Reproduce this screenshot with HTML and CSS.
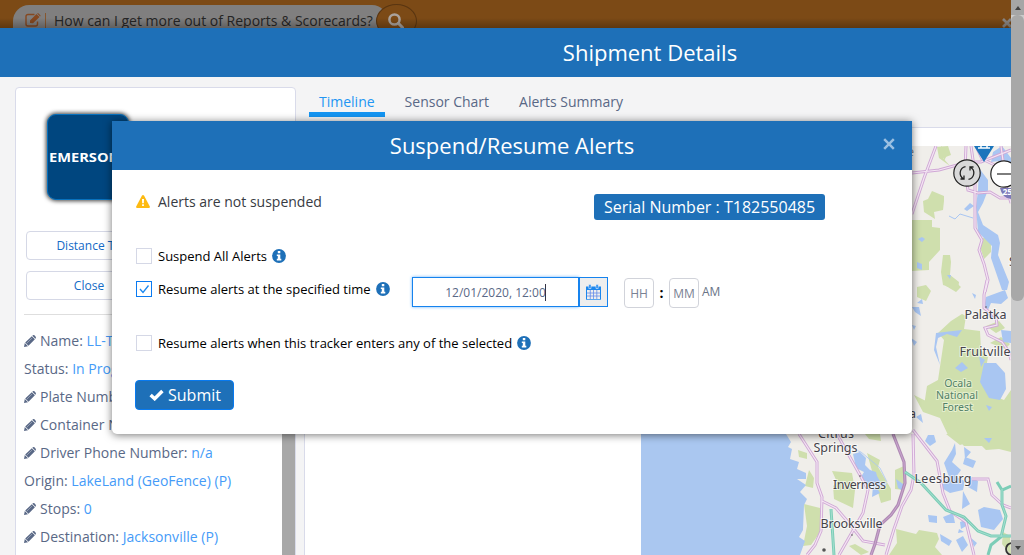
FILE: index.html
```html
<!DOCTYPE html>
<html lang="en">
<head>
<meta charset="utf-8">
<title>Shipment Details</title>
<link rel="stylesheet" href="styles.css">
</head>
<body>
<svg class="defs" width="0" height="0">
  <symbol id="pencil" viewBox="0 0 12 12"><path d="M0 12 .8 8 4 11.200ZM1.200 7.500 7.800 1.200 10.900 4.300 4.500 10.800ZM8.300.7C9.200-.1 10-.1 10.600.5L11.500 1.400C12.100 2 12.100 2.800 11.400 3.700Z"/><path d="M2.800 8.200 8.200 2.900" stroke="#fff" stroke-width=".6" opacity=".6"/></symbol>
  <symbol id="info" viewBox="0 0 14 14"><circle cx="7" cy="7" r="6.900"/><path fill="#fff" d="M5.800 2.100H8.300V4.200H5.800ZM4.800 5.400H8.300V9.800H9.300V11.500H4.800V9.800H5.800V7.100H4.800Z"/></symbol>
</svg>
<div class="app">
  <div class="page">
    <header class="topbar">
      <div class="ask">
        <svg class="ask-icon" viewBox="0 0 16 14"><path d="M9.500 1.500H3A2 2 0 0 0 1 3.500V11A2 2 0 0 0 3 13H10.500A2 2 0 0 0 12.500 11V8.500" fill="none" stroke="currentColor" stroke-width="1.400"/><path d="M5 10V7.500L11.500 1 14.500 4 8 10.300ZM12.200.5 13 .1 15.600 2.600 15.100 3.400Z" fill="currentColor"/></svg>
        <span class="ask-rule"></span>
        <span>How can I get more out of Reports &amp; Scorecards?</span>
      </div>
      <div class="search"><svg viewBox="0 0 16 16"><circle cx="6.500" cy="6.500" r="5.100" fill="none" stroke="currentColor" stroke-width="2.500"/><path d="M10.300 10.300 14.500 14.500" stroke="currentColor" stroke-width="3" stroke-linecap="round"/></svg></div>
      <svg class="top-close" viewBox="0 0 10 10"><path d="M1 1 9 9M9 1 1 9" stroke="#8b8784" stroke-width="2.700"/></svg>
    </header>
    <div class="titlebar">Shipment Details</div>
    <main class="content">
      <aside class="card">
        <div class="logo"><span>EMERSON</span></div>
        <div class="card-btn first">Distance To</div>
        <div class="card-btn">Close</div>
        <ul class="facts">
          <li><svg><use href="#pencil"/></svg>Name:&nbsp;<a>LL-T1</a></li>
          <li>Status:&nbsp;<a>In Progress</a></li>
          <li><svg><use href="#pencil"/></svg>Plate Number:&nbsp;<a>n/a</a></li>
          <li><svg><use href="#pencil"/></svg>Container Number:</li>
          <li><svg><use href="#pencil"/></svg>Driver Phone Number:&nbsp;<a>n/a</a></li>
          <li>Origin:&nbsp;<a>LakeLand (GeoFence) (P)</a></li>
          <li><svg><use href="#pencil"/></svg>Stops:&nbsp;<a>0</a></li>
          <li><svg><use href="#pencil"/></svg>Destination:&nbsp;<a>Jacksonville (P)</a></li>
        </ul>
        <div class="card-scroll"></div>
      </aside>
      <section class="detail">
        <nav class="tabs"><span class="tab active">Timeline</span><span class="tab">Sensor Chart</span><span class="tab">Alerts Summary</span></nav>
        <div class="panel">
          <svg class="map" viewBox="641 146 370 409">
            <rect x="641" y="146" width="370" height="409" fill="#f0eeea"/>
            <!-- forests and parks -->
            <g fill="#cfdfad">
              <path d="M937 147 948 146 951 155 943 158 950 166 939 158Z"/>
              <path d="M932 191 944 196 944 201 943 210 934 212 935 219 924 212 923 201 928 199ZM941 146 949 151 944 161Z"/>
              <path d="M912 220 932 220 932 227 940 228 940 250 929 262 929 270 912 271Z"/>
              <path d="M943 255 950 255 951 262 950 275 959 282 958 290 943 285 941 272ZM981 240 986 236 991 243 991 252 984 259 980 247Z"/>
              <path d="M943 281 953 280 961 287 956 292 946 286ZM917 287 926 285 931 291 926 301 917 297Z"/>
              <path d="M951 321 962 314 966 316 964 329 980 331 981 350 988 357 984 379 992 395 1004 400 1011 390V450L991 446 964 446 945 426 943 414 924 406 927 386 938 380 944 340 938 333Z"/>
              <path d="M914 395 928 402 935 410 955 413 958 433 948 435 940 418 923 412ZM986 326 999 321 1005 328 996 333ZM990 343 1001 337 1010 344 1005 349Z"/>
              <path d="M832 471 852 473 855 490 853 508 834 499 833 486 837 482ZM867 453 880 460 878 467 891 489 891 500 881 503 874 478ZM895 470 904 466 904 490 895 489ZM865 434 880 434 881 441 869 439Z"/>
              <path d="M804 504 820 508 821 531 811 545 803 546 807 526ZM809 470 814 478 813 488 805 486Z"/>
              <path d="M896 529 916 534 919 530 937 533 939 539 935 547 942 555H889L897 543ZM1003 532 1010 536 1011 555 1002 544Z"/>
              <path d="M946 434 989 434 1011 428V452L999 449 986 450 976 440 960 445Z"/>
              <path d="M798 450 807 453 807 459 799 457ZM849 546 855 544 869 552 861 555Z"/>
            </g>
            <!-- Gulf coast -->
            <path fill="#aac7f0" d="M641 146H760L786 434 791 442 788 447 792 449 790 459 799 462 797 469 806 473 806 479 797 479 806 485 800 492 807 499 804 505 803 530 799 537 805 541 800 555H641Z"/>
            <!-- lakes and rivers -->
            <g fill="#a9c6f2">
              <path d="M979 168 988 180 988 190 983 203 978 212 983 225 998 235 1000 243 998 255 1009 282 1007 290 1002 290 991 258 992 246 978 232 976 207 978 190Z"/>
              <path d="M993 152 1002 146 1011 158V166L999 161 991 162ZM970 203 974 206 967 211 964 209Z"/>
              <path d="M986 297 1005 290 1008 298 1001 304 991 303 987 312 997 317 992 320 984 309ZM1001 330 1011 331V343L1003 342Z"/>
              <path d="M984 363 996 363 1005 373 1006 389 1000 400 989 398 980 382ZM955 368 962 362 968 368 961 372ZM979 356 985 360 981 367Z"/>
              <path d="M936 333 953 331 962 330 957 337 947 334 938 338 936 347 940 365 934 350Z"/>
              <path d="M978 510 984 507 1000 510 1003 519 994 530 981 527Z"/>
              <path d="M955 443 952 450 944 463 949 477 940 487 950 493 963 490 965 481 956 477 961 470 952 462 956 454ZM964 447 971 452 965 459ZM965 457 976 461 973 468 963 464ZM969 476 978 481 977 492 968 487ZM963 491 970 504 962 509Z"/>
              <path d="M928 435 934 435 936 442 930 446 925 441ZM896 479 903 484 903 491 898 488ZM916 417 921 414 923 423Z"/>
              <path d="M853 454 860 452 866 458 865 465 870 470 876 472 877 476 881 483 877 488 880 493 872 497 873 486 866 484 861 477 864 472 856 468ZM879 482 887 483 885 487 880 487Z"/>
              <path d="M928 515 937 516 937 523 929 522ZM943 517 953 513 955 523 946 523ZM960 522 968 519 968 525 961 529ZM940 534 952 541 949 546 941 541ZM956 540 963 536 968 545 962 552ZM971 538 977 543 974 547ZM959 529 964 532 958 533Z"/>
              <path d="M918 239 922 237 925 239 922 242ZM917 262 922 264 922 270 917 268ZM947 275 951 275 950 279ZM912 307 919 307 921 316 915 312ZM922 299 923 304 917 303ZM972 293 976 295 975 299ZM986 405 992 407 989 411ZM912 325 916 326 914 330ZM911 338 917 342 914 346ZM984 438 992 438 989 443Z"/>
            </g>
            <path d="M949 216 955 219 960 214 973 218" fill="none" stroke="#a9c6f2"/>
            <path d="M835 434 843 445 861 452 880 468 887 482" fill="none" stroke="#a9c6f2" stroke-width=".8"/>
            <!-- roads -->
            <g class="road-edge">
              <path d="M912 173 939 170 968 162 981 162 1011 150M936 146 924 178 912 214"/>
              <path d="M966 146 965 170 968 190 978 193 990 192 1000 198 1011 198M971 146 973 160 975 180 975 210 975 228 982 240 979 250 984 264 988 280 985 292M976 146 982 159 1001 168 1011 203M1001 146 1004 168"/>
              <path d="M987 280 984 295 984 308 996 317 997 325 985 328 988 335 1002 342 1009 352 1011 360"/>
              <path d="M799 434 817 462 817 483 822 497 821 531 815 545 807 555M822 501 836 508 848 522 863 541 885 545M837 434 860 475 868 490 863 513 839 555M913 434 914 475 911 490 902 506 894 529 886 555M913 430 937 461 943 493 950 511 966 522 974 555M972 479 988 479 992 495 1003 505 1011 508"/>
            </g>
            <g class="road-core">
              <path d="M912 173 939 170 968 162 981 162 1011 150M936 146 924 178 912 214"/>
              <path d="M966 146 965 170 968 190 978 193 990 192 1000 198 1011 198M971 146 973 160 975 180 975 210 975 228 982 240 979 250 984 264 988 280 985 292M976 146 982 159 1001 168 1011 203M1001 146 1004 168"/>
              <path d="M987 280 984 295 984 308 996 317 997 325 985 328 988 335 1002 342 1009 352 1011 360"/>
              <path d="M799 434 817 462 817 483 822 497 821 531 815 545 807 555M822 501 836 508 848 522 863 541 885 545M837 434 860 475 868 490 863 513 839 555M913 434 914 475 911 490 902 506 894 529 886 555M913 430 937 461 943 493 950 511 966 522 974 555M972 479 988 479 992 495 1003 505 1011 508"/>
            </g>
            <path d="M893 434 904 462 905 483 898 505 891 515 880 525 875 544 871 555" fill="none" stroke="#b08bb5" stroke-width="3.200"/>
            <path d="M893 434 904 462 905 483 898 505 891 515 880 525 875 544 871 555" fill="none" stroke="#c9a6ce" stroke-width="1"/>
            <path d="M831 509 834 555M905 472 921 483 946 510 964 517 978 531 991 536 1011 536M997 482 1002 490 1011 486M1002 489 1002 505 1006 516 1001 537 991 545 988 555" fill="none" stroke="#7ccdb7" stroke-width="3"/>
            <path d="M831 509 834 555M905 472 921 483 946 510 964 517 978 531 991 536 1011 536M1002 489 1002 505 1006 516 1001 537" fill="none" stroke="#a9e0d1" stroke-width=".9"/>
            <!-- place names -->
            <g class="places">
              <text x="964.500" y="319" textLength="42">Palatka</text>
              <text x="959.500" y="356" textLength="51">Fruitville</text>
              <text x="818" y="438" textLength="36">Citrus</text>
              <text x="813.500" y="452" textLength="44">Springs</text>
              <text x="833" y="489" textLength="53">Inverness</text>
              <text x="914.500" y="483" textLength="57">Leesburg</text>
              <text x="820.500" y="528" textLength="62">Brooksville</text>
              <text x="880" y="418" textLength="36">Ocala</text>
              <text x="1009" y="266">S</text>
              <text x="907" y="156" opacity=".6">e</text>
            </g>
            <g class="forest">
              <text x="958" y="387">Ocala</text><text x="957" y="399">National</text><text x="957.500" y="411">Forest</text>
            </g>
            <g fill="#555"><circle cx="824" cy="550" r="1.800"/><circle cx="860" cy="476" r="1" opacity=".6"/><circle cx="852" cy="535" r="1" opacity=".6"/><circle cx="986" cy="307" r="1" opacity=".6"/></g>
            <!-- markers and controls -->
            <path d="M974 146H994L984 162Z" fill="#1b75bc"/><path d="M978 148H990M981 146V148M987 146V148" stroke="#fff" stroke-width="1.500"/>
            <path d="M1000 188H1011V199Q1002 198 1000 188Z" fill="#7d78b8"/><text x="1002.500" y="195" font-family="Open Sans, sans-serif" font-size="8.500" font-weight="700" fill="#fff">25</text>
            <circle cx="967" cy="173" r="13.200" fill="#d9d9d9" stroke="#222" stroke-width="1.200"/>
            <g fill="none" stroke="#222" stroke-width="1.300"><path d="M963.500 178.800A6.600 6.600 0 0 1 965.500 166.600M968.500 179.400A6.600 6.600 0 0 0 970.500 167.200M960.500 179H964V175.500M973.500 167H970V170.500"/></g>
            <circle cx="1004" cy="174" r="13.200" fill="#fff" stroke="#222" stroke-width="1.200"/><path d="M997 174H1011" stroke="#666" stroke-width="1.700"/>
            <circle cx="1012" cy="549" r="6" fill="none" stroke="#333" stroke-width="1.800"/>
          </svg>
        </div>
      </section>
    </main>
    <div class="dialog">
      <div class="dialog-head">Suspend/Resume Alerts<svg class="dialog-close" viewBox="0 0 12 12"><path d="M1.200 1.200 10.800 10.800M10.800 1.200 1.200 10.800" stroke="#9bc0e2" stroke-width="2.500"/></svg></div>
      <div class="dialog-body">
        <div class="status-row">
          <svg class="warn" viewBox="0 0 14 13"><path d="M6 .6Q7-.5 8 .6L13.800 11.500Q14.100 13 13 13H1Q-.1 13 .2 11.500Z" fill="#fdba12"/><path d="M6 4H8L7.800 8.300H6.200ZM6.100 9.200H7.900V11H6.100Z" fill="#fff"/></svg>
          <span class="status-text">Alerts are not suspended</span>
          <span class="serial">Serial Number : T182550485</span>
        </div>
        <label class="option all"><span class="box"></span><span>Suspend All Alerts</span><svg class="info"><use href="#info"/></svg></label>
        <div class="time-row">
          <label class="option time"><span class="box on"><svg viewBox="0 0 14 14"><path d="M3 7 6 10.500 11.500 3.500" fill="none" stroke="#1a88f0" stroke-width="1.300"/></svg></span><span>Resume alerts at the specified time</span><svg class="info"><use href="#info"/></svg></label>
          <div class="date"><span>12/01/2020, 12:00</span><i class="caret"></i></div>
          <div class="cal"><svg viewBox="0 0 15 16"><path d="M0 2.500H15V15.700H0Z" fill="#1b86ed"/><path d="M1 6H14V15H1Z" fill="#eee"/><path d="M4.300 6V15M7.500 6V15M10.800 6V15M1 9H14M1 12H14" stroke="#648bea" stroke-width=".8"/><path d="M2.800.4H5V4.500H2.800ZM10 .4H12.200V4.500H10Z" fill="#1b86ed" stroke="#e8eefb" stroke-width=".6"/></svg></div>
          <div class="unit">HH</div><b class="colon">:</b><div class="unit">MM</div><span class="ampm">AM</span>
        </div>
        <label class="option enter"><span class="box"></span><span>Resume alerts when this tracker enters any of the selected</span><svg class="info"><use href="#info"/></svg></label>
        <div class="submit"><svg viewBox="0 0 14 11"><path d="M1.500 5.500 5.300 9 12.500 1.700" fill="none" stroke="#fff" stroke-width="3.200"/></svg><span>Submit</span></div>
      </div>
    </div>
  </div>
  <div class="scrollbar"><div class="arrow up"></div><div class="thumb"></div><div class="arrow down"></div></div>
</div>
</body>
</html>
```
FILE: styles.css
```css
* { box-sizing: border-box; }
body { margin: 0; font-family: "Open Sans", "Noto Sans", sans-serif; font-size: 14px; color: #596886; }
.defs { position: absolute; }
.app { display: flex; width: 1024px; height: 555px; overflow: hidden; }
.page { position: relative; flex: 1; display: flex; flex-direction: column; overflow: hidden; background: #f4f4f5; }
.topbar { display: flex; height: 28px; flex: none; background: #7c4a16; overflow: hidden; position: relative; padding: 5px 0 0 13px; }
.topbar::after { content: ""; position: absolute; inset: 18px 0 0 0; background: linear-gradient(transparent, rgba(0,0,0,.25)); }
.ask { display: flex; align-items: center; flex: none; width: 375px; height: 30px; padding-left: 12px; border-radius: 16px 16px 0 0; background: #807f7f; color: #252525; font-size: 14px; white-space: nowrap; }
.ask-icon { width: 16px; height: 14px; color: #854820; }
.ask-rule { width: 1px; height: 15px; margin: 0 8px 0 4px; background: #87572f; }
.search { display: flex; position: relative; flex: none; width: 41px; height: 34px; margin: -1px 0 0 -12px; padding: 8px 0 0 11px; border: 1px solid #593511; border-radius: 50%; background: #7c4a16; color: #aaa29c; }
.search svg { width: 16px; height: 16px; }
.top-close { width: 10px; height: 10px; margin: 13px 0 0 auto; flex: none; position: relative; left: 1px; }
.titlebar { flex: none; height: 49px; padding-left: 289px; background: #1e70b8; color: #fff; font-size: 22px; line-height: 49px; text-align: center; }
.content { display: flex; flex: 1; min-height: 0; padding: 10px 0 0 15px; gap: 8px; }
.card { position: relative; width: 281px; height: 500px; flex: none; padding: 26px 10px 0; border: 1px solid #d9dbea; border-radius: 4px; background: #fff; }
.logo { display: flex; align-items: center; width: 82px; height: 86px; margin-left: 21px; padding-left: 1px; border-radius: 9px; border: 1px solid #0871bd; background: #00467f; box-shadow: 0 0 4px 1px rgba(0,0,0,.75); color: #fff; font-size: 12px; font-weight: 700; overflow: hidden; }
.logo span { transform: scaleX(1.22); transform-origin: left; }
.card-btn { width: 126px; height: 29px; margin-top: 11px; border: 1px solid #d5d8e6; border-radius: 4px; color: #126ac6; font-size: 12px; line-height: 27px; text-align: center; }
.card-btn.first { margin-top: 31px; }
.facts { list-style: none; margin: 14px -2px 0; padding: 11px 0 0; border-top: 1px solid #dedede; }
.facts li { display: flex; align-items: center; height: 28px; white-space: nowrap; letter-spacing: .02px; }
.facts svg { width: 12px; height: 12px; margin: 2px 4px 0 0; fill: #596886; }
.facts a { color: #459bf8; }
.card-scroll { position: absolute; right: 0; top: 200px; width: 13px; height: 300px; background: #a8a8a8; }
.detail { display: flex; flex-direction: column; flex: 1; min-width: 0; }
.tabs { display: flex; flex: none; height: 40px; padding-left: 5px; gap: 10px; }
.tab { height: 30px; padding: 0 10px; line-height: 30px; white-space: nowrap; }
.tab.active { border-bottom: 5px solid #1495f3; color: #2296f3; }
.panel { display: flex; flex: none; height: 440px; padding: 18px 0 0 336px; border: 1px solid #d9dbea; border-right: 0; background: #fff; }
.map { display: block; flex: none; width: 370px; height: 409px; font-family: "Noto Sans", sans-serif; }
.road-edge { fill: none; stroke: #d0a8d6; stroke-width: 3; }
.road-core { fill: none; stroke: #f4e6f3; stroke-width: 1.2; }
.places { fill: #45434a; font-size: 12.5px; stroke: #fff; stroke-width: 2px; stroke-opacity: .6; paint-order: stroke; }
.forest { fill: #518066; font-size: 10.5px; text-anchor: middle; stroke: #e5efce; stroke-width: 2px; paint-order: stroke; }
.scrollbar { display: flex; flex-direction: column; width: 13px; background: #cbcbcb; }
.thumb { height: 286px; background: #a8a8a8; border-radius: 6px; }
.arrow { display: flex; align-items: center; justify-content: center; height: 15px; background: #a6a6a6; }
.arrow::before { content: ""; border: 3.5px solid transparent; }
.up::before { border-bottom: 4px solid #424242; border-top: 0; }
.down { margin-top: auto; }
.down::before { border-top: 4px solid #424242; border-bottom: 0; }
.dialog { position: absolute; left: 112px; top: 121px; width: 800px; height: 313px; border-radius: 0 0 5px 5px; background: #fff; box-shadow: 0 1px 9px rgba(0,0,0,.55); color: #000; }
.dialog-head { position: relative; height: 49px; background: #1e70b8; color: #fff; font-size: 22px; line-height: 49px; text-align: center; }
.dialog-close { position: absolute; right: 17px; top: 17px; width: 12px; height: 12px; }
.dialog-body { display: flex; flex-direction: column; align-items: flex-start; padding: 23px 24px; font-size: 13px; white-space: nowrap; }
.status-row { display: flex; height: 28px; width: 100%; color: #383b43; font-size: 14px; line-height: 18px; }
.warn { width: 14px; height: 13px; margin: 2px 8px 0 0; }
.status-text { width: 436px; }
.serial { height: 26px; margin-top: 1px; padding: 0 10px; border-radius: 3px; background: #1e70b8; color: #fff; font-size: 16px; line-height: 26px; }
.option { display: flex; align-items: center; height: 16px; }
.box { width: 16px; height: 16px; margin-right: 6px; border: 1px solid #d5d8e6; background: #fff; }
.box.on { border-color: #0a7bf2; }
.box svg { display: block; width: 14px; height: 14px; }
.info { width: 14px; height: 14px; margin-left: 5px; fill: #1e70b8; }
.all { margin-top: 27px; }
.time-row { display: flex; height: 31px; margin-top: 12px; }
.time { width: 276px; margin-top: 5px; }
.date { display: flex; align-items: center; justify-content: center; width: 167px; height: 30px; margin-top: 1px; border: 1px solid #1683ee; box-shadow: 0 0 3px #6db4fa; color: #596886; font-size: 12px; }
.caret { width: 1px; height: 17px; margin-left: -1px; background: #334; }
.cal { display: flex; align-items: center; justify-content: center; width: 29px; height: 30px; margin-top: 1px; border: 1px solid #1683ee; background: #eee; }
.cal svg { width: 15px; height: 16px; }
.unit { width: 30px; height: 30px; margin-top: 2px; border: 1px solid #d1d3da; border-radius: 4px; color: #798193; font-size: 12px; line-height: 29px; text-align: center; }
.cal + .unit { margin-left: 16px; }
.colon { width: 15px; font-size: 14px; line-height: 33px; text-align: center; }
.ampm { margin-left: 3px; color: #697386; font-size: 12px; line-height: 32px; }
.enter { margin-top: 28px; }
.submit { display: flex; align-items: center; width: 99px; height: 30px; margin: 29px 0 0 -1px; padding-left: 13px; border: 1px solid #087af0; border-radius: 4px; background: #1e70b8; color: #fff; font-size: 16px; }
.submit svg { width: 15px; height: 12px; margin-right: 4px; }
```
